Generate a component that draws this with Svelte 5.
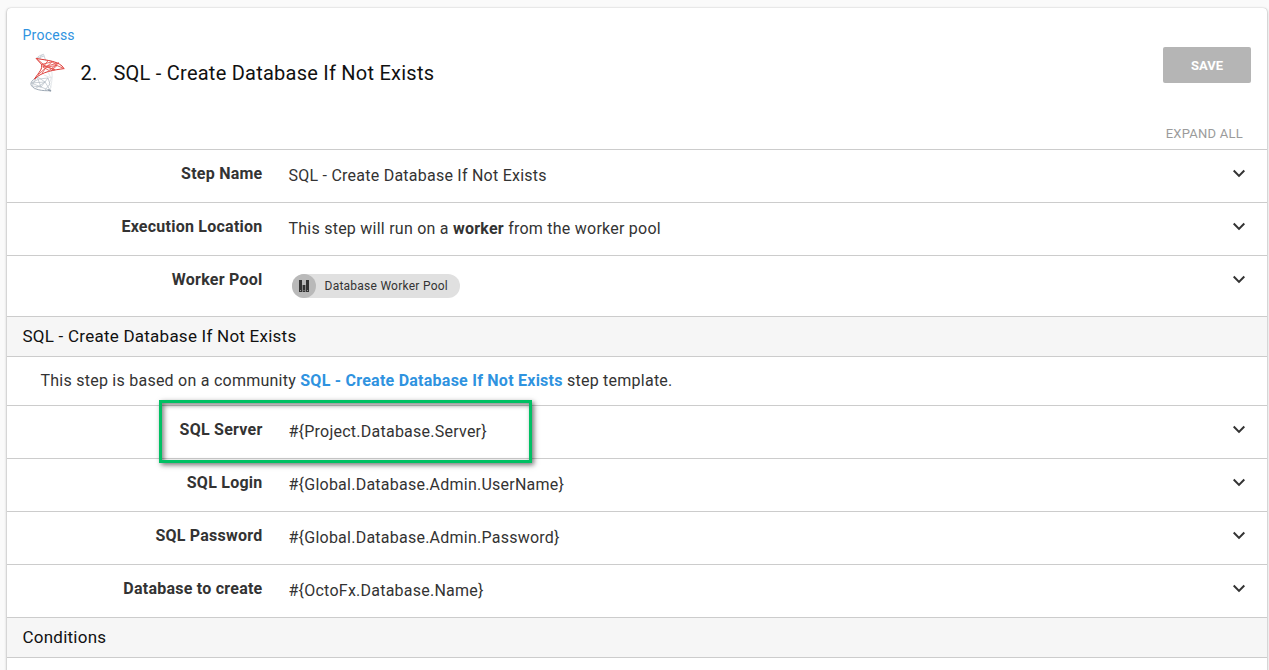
<script>
  const template = 'SQL - Create Database If Not Exists';
  const parameters = [
    { label: 'SQL Server', value: '#{Project.Database.Server}', highlighted: true },
    { label: 'SQL Login', value: '#{Global.Database.Admin.UserName}' },
    { label: 'SQL Password', value: '#{Global.Database.Admin.Password}' },
    { label: 'Database to create', value: '#{OctoFx.Database.Name}' }
  ];
</script>

{#snippet chevron()}
  <svg class="chevron" viewBox="0 0 24 24"><path d="M7.41 7.84L12 12.42l4.59-4.58L18 9.25l-6 6-6-6z" /></svg>
{/snippet}

<main class="card">
  <header>
    <div class="heading">
      <a class="crumb" href="#process">Process</a>
      <div class="title">
        <svg class="logo" viewBox="0 0 40 40" fill="none" stroke-linecap="round" stroke-linejoin="round">
          <g stroke="#c3c9d0" stroke-width=".8">
            <path d="M8.5 5.2C10 3.2 13 2 15.5 1.2L17.5 7M8.5 5.2L15.5 3.4L13 2.5L12 6" />
            <path d="M23.5 16.5C25 24 23.5 32 22 37M20 19L23 25L16 22M23.8 24L21 31L23 34" stroke="#dde1e5" />
          </g>
          <g stroke="#929eab" stroke-width=".9">
            <path d="M7 25.5C4 27.5 2 30 3.4 32.5C6 36.8 14 38 22.5 37.7" />
            <path d="M9 23.5L17 29L22.5 37.7L13 34L3.4 30L11 26L20 25L13 34L4 33L9 23.5L13 34M17 29L3.4 30M17 29L7 35.8M20 25L22 31L17 37" stroke="#b5bdc6" stroke-width=".7" />
            <path d="M20.5 37L22.5 37.7" stroke-width="1.5" />
          </g>
          <g stroke="#dc3430" stroke-width="1">
            <path d="M8.5 5.5C18 7.2 32 8 36 15.6C26 17 14 18.5 6.5 26C11 19 15 16 13.5 11.5Z" />
            <path d="M13.5 11.5L24 8.8L18.5 14L29 12.5L36 15.6M13.5 11.5L27 16.8L18.5 14L14.5 19.5M24 8.8L29 12.5L24 17M8.5 5.5L18.5 14L10.5 21.5M20 7.7L15 14L31 9.8L21 17.5L15 14" stroke="#e4504a" stroke-width=".85" />
          </g>
        </svg>
        <h1><span class="number">2.</span>{template}</h1>
      </div>
    </div>
    <div class="actions">
      <button class="save">SAVE</button>
      <button class="expand">EXPAND ALL</button>
    </div>
  </header>

  <section class="row">
    <div class="label">Step Name</div>
    <div class="value">{template}</div>
    {@render chevron()}
  </section>
  <section class="row">
    <div class="label">Execution Location</div>
    <div class="value">This step will run on a <b>worker</b> from the worker pool</div>
    {@render chevron()}
  </section>
  <section class="row pool">
    <div class="label">Worker Pool</div>
    <div class="value">
      <span class="chip">
        <span class="avatar">
          <svg viewBox="0 0 12 14"><path fill="#333" d="M1 1h3v12H1zM4.6 6h2.8v7H4.6zM8 1h3v12H8z" /><path fill="#bbb" d="M2 11.2h1v.8H2zM5.5 11.2h1v.8h-1zM9 11.2h1v.8H9z" /></svg>
        </span>
        <span class="chip-text">Database Worker Pool</span>
      </span>
    </div>
    {@render chevron()}
  </section>
  <h2>{template}</h2>
  <p>This step is based on a community <a href="#template">{template}</a> step template.</p>
  {#each parameters as item}
    <section class="row" class:highlighted={item.highlighted}>
      <div class="label">{item.label}</div>
      <div class="value">{item.value}</div>
      {@render chevron()}
    </section>
  {/each}
  <h2>Conditions</h2>
</main>

<style>
  :global(body) {
    background: #fafafa;
    overflow: hidden;
  }
  .card {
    box-sizing: border-box;
    width: 1260px;
    height: 680px;
    margin: 8px 0 0 7px;
    background: #fff;
    border-radius: 4px;
    box-shadow: 0 1px 3px rgba(0, 0, 0, .35), 0 0 1px rgba(0, 0, 0, .25);
    color: #333;
    font: 16px/24px Roboto, sans-serif;
    letter-spacing: .24px;
  }
  header {
    display: flex;
    justify-content: space-between;
    box-sizing: border-box;
    height: 142px;
    padding: 16px 16px 0 15.5px;
    border-bottom: 1px solid #ccc;
  }
  a {
    color: #2f93e0;
    text-decoration: none;
  }
  .crumb {
    display: block;
    font-size: 14px;
    line-height: 22px;
  }
  .title {
    display: flex;
    align-items: center;
    height: 40px;
    margin-top: 7px;
    padding-left: 5px;
  }
  .logo {
    width: 40px;
    height: 40px;
  }
  h1 {
    margin: 0 0 0 13px;
    color: #111;
    font-size: 20px;
    font-weight: 400;
    line-height: 28px;
    letter-spacing: .24px;
  }
  .number {
    display: inline-block;
    width: 33px;
  }
  .actions {
    display: flex;
    flex-direction: column;
    align-items: flex-end;
    padding-top: 23px;
  }
  button {
    padding: 0;
    border: 0;
    font: 500 13px/36px Roboto, sans-serif;
  }
  .save {
    width: 88px;
    height: 36px;
    padding-top: 1px;
    border-radius: 2px;
    background: #b5b5b5;
    color: #fff;
    font-weight: 700;
  }
  .expand {
    margin: 33px 8px 0 0;
    background: none;
    color: #9b9b9b;
    font-weight: 400;
    letter-spacing: .25px;
  }
  .row {
    position: relative;
    display: flex;
    box-sizing: border-box;
    height: 53px;
    padding-top: 12px;
    border-bottom: 1px solid #ccc;
  }
  .label {
    width: 255.5px;
    font-weight: 700;
    text-align: right;
  }
  .value {
    flex: 1;
    padding: 2px 0 0 26px;
  }
  .chevron {
    width: 24px;
    height: 24px;
    margin: 0 16px 0 0;
    fill: #333;
  }
  .pool {
    height: 61px;
  }
  .pool .value {
    padding: 6px 0 0 29.5px;
  }
  .chip {
    display: inline-flex;
    width: 168px;
    height: 24px;
    border-radius: 12px;
    background: #e0e0e0;
    font-size: 12px;
    letter-spacing: .25px;
  }
  .avatar {
    display: flex;
    align-items: center;
    justify-content: center;
    width: 24px;
    height: 24px;
    border-radius: 50%;
    background: #b9b9b9;
  }
  .avatar svg {
    width: 12px;
    height: 14px;
  }
  .chip-text {
    margin-left: 8.5px;
  }
  h2 {
    box-sizing: border-box;
    height: 40px;
    margin: 0;
    padding: 7px 15.5px 0;
    border-bottom: 1px solid #ccc;
    background: #f6f6f6;
    color: #111;
    font-size: 17px;
    font-weight: 400;
    line-height: 24px;
  }
  p {
    box-sizing: border-box;
    height: 49px;
    margin: 0;
    padding: 12px 33.5px 0;
    border-bottom: 1px solid #ccc;
    letter-spacing: .245px;
  }
  p a {
    font-weight: 700;
  }
  .highlighted::after {
    content: '';
    position: absolute;
    z-index: 1;
    top: -6px;
    left: 152px;
    box-sizing: border-box;
    width: 373px;
    height: 63px;
    border: 3px solid #00c063;
    box-shadow: 2px 2px 5px rgba(0, 0, 0, .55), inset 2px 2px 5px rgba(0, 0, 0, .5);
  }
</style>
